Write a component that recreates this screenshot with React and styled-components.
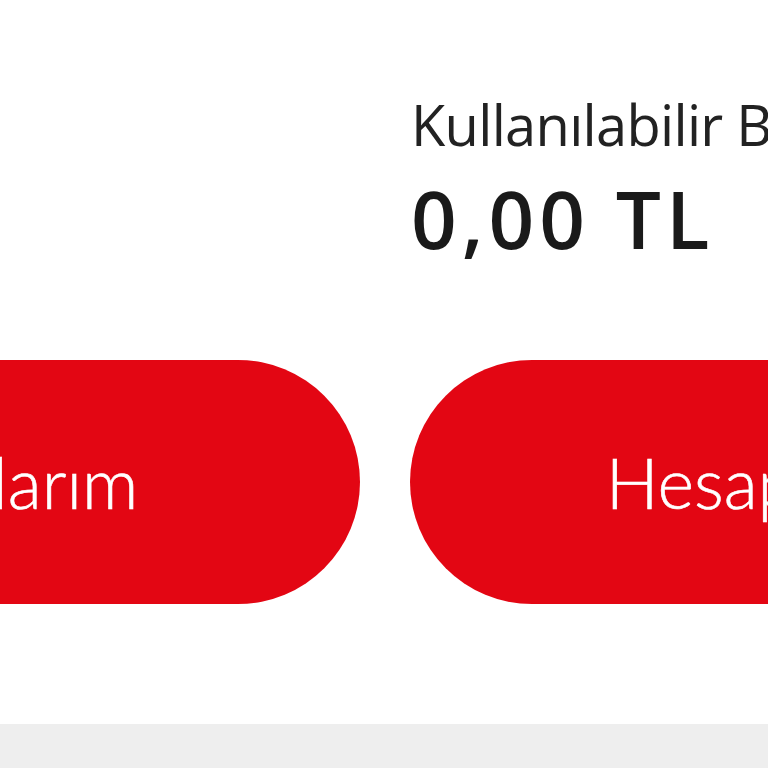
import React from "react";
import styled, { createGlobalStyle } from "styled-components";

const Global = createGlobalStyle`
  html, body { margin: 0; padding: 0; background: #ffffff; }
  #root { width: 768px; height: 768px; overflow: hidden; }
`;

const Page = styled.div`
  width: 768px;
  height: 768px;
  overflow: hidden;
  display: flex;
  flex-direction: column;
  background: #ffffff;
  font-family: "Open Sans", "Liberation Sans", sans-serif;
`;

const Card = styled.div`
  flex: 0 0 724px;
  display: grid;
  grid-template-columns: 716px 728px;
  column-gap: 50px;
  grid-template-rows: auto auto;
  align-content: start;
  margin-left: -356px;
  padding-top: 88px;
  box-sizing: border-box;
`;

const Balance = styled.div`
  grid-column: 2;
  grid-row: 1;
  display: flex;
  flex-direction: column;
  padding-left: 1px;
`;

const Label = styled.div`
  font-size: 56px;
  line-height: 72px;
  font-weight: 400;
  color: #222222;
  white-space: nowrap;
  letter-spacing: -0.7px;
`;

const Amount = styled.div`
  margin-top: 8px;
  font-size: 80px;
  line-height: 100px;
  font-weight: 600;
  color: #1a1a1a;
  white-space: nowrap;
  letter-spacing: 5px;
`;

const ActionButton = styled.button`
  grid-row: 2;
  margin-top: 92px;
  height: 244px;
  border: none;
  border-radius: 122px;
  background: #e30613;
  color: #ffffff;
  font-family: "Lato", "Open Sans", sans-serif;
  font-size: 70px;
  font-weight: 300;
  white-space: nowrap;
  text-align: center;
  padding: 0;
  -webkit-text-stroke: 0.6px #ffffff;
`;

const Footer = styled.div`
  flex: 1;
  background: #eeeeee;
`;

export default function App() {
  return (
    <>
      <Global />
      <Page>
        <Card>
          <Balance>
            <Label>Kullanılabilir Bakiye</Label>
            <Amount>0,00 TL</Amount>
          </Balance>
          <ActionButton>Kartlarım</ActionButton>
          <ActionButton>Hesaplarım</ActionButton>
        </Card>
        <Footer />
      </Page>
    </>
  );
}
